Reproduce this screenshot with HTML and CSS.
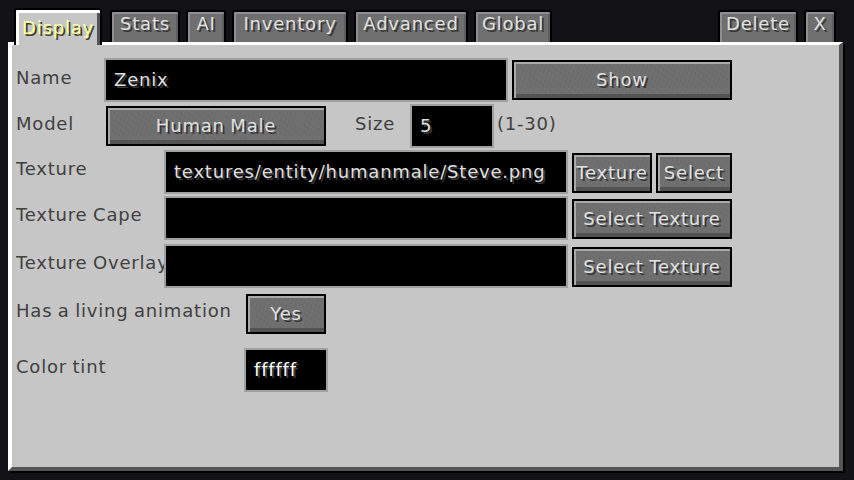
FILE: index.html
```html
<!DOCTYPE html>
<html>
<head>
<meta charset="utf-8">
<link rel="stylesheet" href="styles.css">
</head>
<body>
<div class="tabs">
  <div class="tab tab-active w-display">Display</div>
  <div class="tab w-stats">Stats</div>
  <div class="tab w-ai">AI</div>
  <div class="tab w-inventory">Inventory</div>
  <div class="tab w-advanced">Advanced</div>
  <div class="tab w-global">Global</div>
  <div class="tab tab-push w-delete">Delete</div>
  <div class="tab w-x">X</div>
</div>
<div class="panel">
  <div class="row row-name">
    <div class="label label-name">Name</div>
    <div class="field field-name">Zenix</div>
    <div class="btn btn-show">Show</div>
  </div>
  <div class="row row-model">
    <div class="label label-model">Model</div>
    <div class="btn btn-model">Human Male</div>
    <div class="label label-size">Size</div>
    <div class="field field-small">5</div>
    <div class="label label-range">(1-30)</div>
  </div>
  <div class="row row-tex">
    <div class="label label-wide">Texture</div>
    <div class="field field-tex">textures/entity/humanmale/Steve.png</div>
    <div class="btn btn-texture">Texture</div>
    <div class="btn btn-select">Select</div>
  </div>
  <div class="row row-cape">
    <div class="label label-wide">Texture Cape</div>
    <div class="field field-tex"></div>
    <div class="btn btn-seltex">Select Texture</div>
  </div>
  <div class="row row-overlay">
    <div class="label label-wide">Texture Overlay</div>
    <div class="field field-tex"></div>
    <div class="btn btn-seltex">Select Texture</div>
  </div>
  <div class="row row-anim">
    <div class="label label-anim">Has a living animation</div>
    <div class="btn btn-yes">Yes</div>
  </div>
  <div class="row row-tint">
    <div class="label label-tint">Color tint</div>
    <div class="field field-small field-white">ffffff</div>
  </div>
</div>
</body>
</html>
```
FILE: styles.css
```css
html, body {
  margin: 0;
  padding: 0;
}
body {
  width: 854px;
  height: 480px;
  overflow: hidden;
  background: #121217;
  font-family: "DejaVu Sans", sans-serif;
  font-size: 18px;
  letter-spacing: 0.8px;
  word-spacing: -1px;
  line-height: 20px;
}

/* Tabs */
.tabs {
  display: flex;
  align-items: flex-end;
  box-sizing: border-box;
  height: 42px;
  padding: 8px 18px 0 14px;
}
.tab {
  box-sizing: border-box;
  height: 32px;
  border: 2px solid #000;
  border-bottom: 0;
  border-radius: 3px 3px 0 0;
  background: #6f6f6f;
  box-shadow: inset 2px 2px 0 #8f8f8f, inset -2px 0 0 #5e5e5e;
  color: #e0e0e0;
  text-shadow: 2px 2px 0 #383838;
  text-align: center;
  padding-top: 2px;
  white-space: nowrap;
  margin-left: 6px;
  flex: none;
}
.tab-active {
  height: 37px;
  margin-bottom: -3px;
  margin-left: 0;
  margin-right: 2px;
  padding-top: 8px;
  background: #c6c6c6;
  box-shadow: inset 3px 3px 0 #ffffff, inset -3px 0 0 #555555;
  color: #ffffa0;
  text-shadow: 2px 2px 0 #3f3f28;
  position: relative;
  z-index: 1;
}
.tab-push { margin-left: auto; }
.w-display { width: 88px; }
.w-stats { width: 70px; }
.w-ai { width: 40px; }
.w-inventory { width: 116px; }
.w-advanced { width: 114px; }
.w-global { width: 78px; }
.w-delete { width: 80px; }
.w-x { width: 32px; }

/* Panel */
.panel {
  box-sizing: border-box;
  margin-left: 8px;
  width: 835px;
  height: 429px;
  background: #c6c6c6;
  border-style: solid;
  border-width: 3px 4px 4px 4px;
  border-color: #ffffff #555555 #555555 #ffffff;
  box-shadow: 2px 2px 0 #000;
  padding: 13px 0 0 4px;
}

.row {
  display: flex;
  align-items: flex-start;
}
.row-name { height: 46px; }
.row-model { height: 46px; }
.row-tex { height: 46px; }
.row-cape { height: 48px; }
.row-overlay { height: 50px; }
.row-anim { height: 54px; }
.row-tint { height: 44px; }

.label {
  color: #404040;
  white-space: nowrap;
  overflow: hidden;
  flex: none;
  margin-top: 10px;
}
.row-tex .label, .row-cape .label, .row-overlay .label, .row-tint .label { margin-top: 9px; }
.row-anim .label { margin-top: 7px; }
.label-name { width: 88px; }
.label-model { width: 90px; }
.label-wide { width: 148px; }
.label-anim { width: 230px; }
.label-tint { width: 228px; }
.label-size { width: 55px; margin-left: 29px; }
.label-range { margin-left: 3px; }

/* Text fields */
.field {
  box-sizing: border-box;
  height: 44px;
  border: 2px solid #a0a0a0;
  background: #000;
  color: #e0e0e0;
  text-shadow: 2px 2px 0 #383838;
  padding-left: 8px;
  display: flex;
  align-items: center;
  white-space: nowrap;
  overflow: hidden;
  flex: none;
}
.field-name { width: 404px; }
.field-tex { width: 404px; }
.field-small { width: 84px; }
.field-white { color: #ffffff; text-shadow: 2px 2px 0 #3f3f3f; }

/* Buttons */
.btn {
  box-sizing: border-box;
  height: 40px;
  border: 2px solid #000;
  background-color: #6f6f6f;
  background-image:
    repeating-linear-gradient(37deg, rgba(255,255,255,0.025) 0 1px, transparent 1px 5px),
    repeating-linear-gradient(-71deg, rgba(0,0,0,0.03) 0 1px, transparent 1px 4px);
  box-shadow: inset 2px 2px 0 #a9a9a9, inset 0 -4px 0 #535353;
  color: #e0e0e0;
  text-shadow: 2px 2px 0 #383838;
  display: flex;
  align-items: center;
  justify-content: center;
  white-space: nowrap;
  flex: none;
}
.btn-show { width: 220px; margin-left: 4px; margin-top: 2px; }
.btn-model { width: 220px; margin-top: 2px; }
.btn-texture { width: 80px; margin-left: 4px; margin-top: 3px; }
.btn-select { width: 76px; margin-left: 4px; margin-top: 3px; }
.btn-seltex { width: 160px; margin-left: 4px; margin-top: 3px; }
.btn-yes { width: 80px; }
```
